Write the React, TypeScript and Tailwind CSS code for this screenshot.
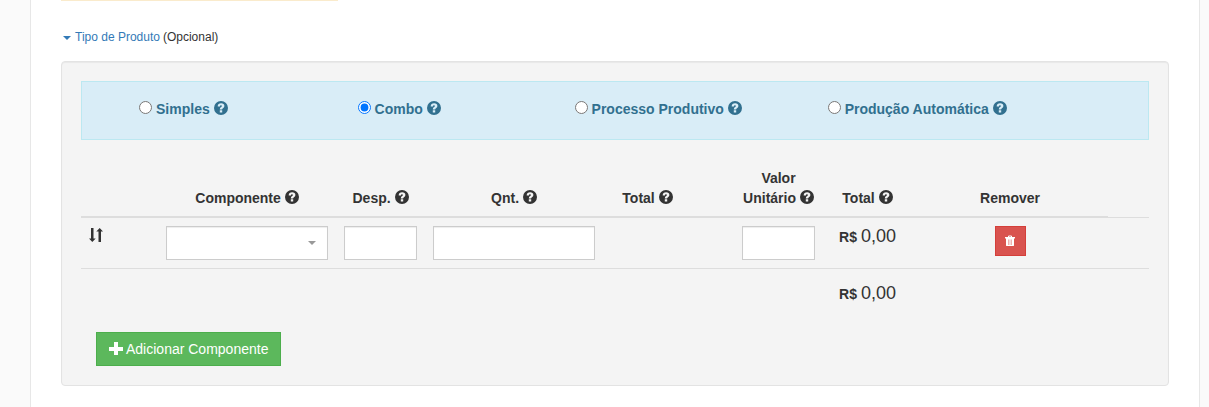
import React, { useState } from 'react';

const PRODUCT_TYPES = [
  { id: 'simples', label: 'Simples', width: 'w-2/12' },
  { id: 'combo', label: 'Combo', width: 'w-3/12' },
  { id: 'processo', label: 'Processo Produtivo', width: 'w-3/12' },
  { id: 'automatica', label: 'Produção Automática', width: 'w-3/12' },
];

const HelpIcon: React.FC = () => (
  <svg viewBox="0 0 14 14" className="inline-block size-[14px] align-[-1px]" fill="currentColor" aria-hidden="true">
    <path
      fillRule="evenodd"
      d="M7 0a7 7 0 1 1 0 14A7 7 0 0 1 7 0zM3.700 5.400H6c0-.7.400-1.100 1-1.100.6 0 .9.300.9.800 0 1-2.100 1.200-2.100 3.300h2.300c0-1.200 2.300-1.300 2.300-3.400C10.400 3.300 9.100 2.300 7.200 2.300 5 2.300 3.700 3.400 3.700 5.400zM5.800 9.200v2.400h2.400V9.200z"
    />
  </svg>
);

const SortIcon: React.FC = () => (
  <svg viewBox="0 0 14 14" className="size-[14px]" fill="currentColor" aria-hidden="true">
    <path d="M2 0h2.500v10.500H6.700L3.300 14 0 10.500h2z" />
    <path d="M9.500 14h2.500V3.500h2L10.700 0 7.300 3.500h2.200z" />
  </svg>
);

const TrashIcon: React.FC = () => (
  <svg viewBox="0 0 12 12" className="size-3" aria-hidden="true">
    <path d="M4.500 2V1h3v1" fill="none" stroke="#fff" strokeWidth="1" />
    <path d="M1 2h10v1.500H1z" fill="#fff" />
    <path d="M2 3h8v7.500c0 .3-.2.500-.5.500h-7c-.3 0-.5-.2-.5-.5z" fill="#fff" />
    <path d="M4 4.500h1V10H4zM5.500 4.500h1V10h-1zM7 4.500h1V10H7z" fill="#d9534f" fillOpacity=".45" />
  </svg>
);

const PlusIcon: React.FC = () => (
  <svg viewBox="0 0 14 14" className="size-[14px]" fill="currentColor" aria-hidden="true">
    <path d="M5 0h4v5h5v4H9v4H5V9H0V5h5z" />
  </svg>
);

const Caret: React.FC<{ className: string }> = ({ className }) => (
  <svg viewBox="0 0 8 4" className={`h-1 w-2 ${className}`} fill="currentColor" aria-hidden="true">
    <path d="M0 0h8L4 4z" />
  </svg>
);

const Price: React.FC = () => (
  <>
    <b>R$</b> <span className="text-lg leading-5">0,00</span>
  </>
);

const field = 'block h-[34px] w-full border border-[#ccc] bg-white px-3 shadow-[inset_0_1px_1px_rgba(0,0,0,0.075)]';

const App: React.FC = () => {
  const [type, setType] = useState('combo');

  return (
    <div className="min-h-screen bg-[#fafafa] pr-[9px] pl-[30px] font-['Liberation_Sans',Arial,sans-serif] text-sm leading-5 text-[#333]">
      <div className="min-h-screen border-x border-[#e7e7e7] bg-white px-[30px] pb-5">
        <div className="w-1/4 border-b border-[#faebcc]" />

        <div className="flex items-center gap-[3px] pt-[26px] pb-[14px] pl-[2px] text-xs leading-5">
          <a href="#tipo" className="flex items-center gap-1 text-[#337ab7]">
            <Caret className="mt-[2px]" />
            Tipo de Produto
          </a>
          <span>(Opcional)</span>
        </div>

        <section
          id="tipo"
          className="rounded border border-[#e3e3e3] bg-[#f4f4f4] p-[19px] shadow-[inset_0_1px_1px_rgba(0,0,0,0.05)]"
        >
          <div className="mb-5 flex border border-[#bce8f1] bg-[#d9edf7] px-[15px] pt-[17px] pb-5 font-bold text-[#31708f]">
            {PRODUCT_TYPES.map((item) => (
              <div key={item.id} className={`${item.width} text-center`}>
                <label className="inline-flex gap-1">
                  <input
                    type="radio"
                    name="tipo"
                    className="mt-[2px] size-[13px]"
                    checked={type === item.id}
                    onChange={() => setType(item.id)}
                  />
                  <span>
                    {item.label} <HelpIcon />
                  </span>
                </label>
              </div>
            ))}
          </div>

          <table className="w-full table-fixed border-separate border-spacing-0">
            <colgroup>
              <col className="w-[77px]" />
              <col className="w-2/12" />
              <col className="w-1/12" />
              <col className="w-2/12" />
              <col className="w-1/12" />
              <col className="w-[42px]" />
              <col className="w-1/12" />
              <col className="w-1/12" />
              <col className="w-[196px]" />
              <col />
            </colgroup>
            <thead>
              <tr className="align-bottom [&>th]:border-[#ddd] [&>th]:p-2 [&>th:not(:last-child)]:border-b-2">
                <th />
                <th>Componente <HelpIcon /></th>
                <th>Desp. <HelpIcon /></th>
                <th>Qnt. <HelpIcon /></th>
                <th>Total <HelpIcon /></th>
                <th />
                <th>Valor Unitário <HelpIcon /></th>
                <th>Total <HelpIcon /></th>
                <th>Remover</th>
                <th className="border-b" />
              </tr>
            </thead>
            <tbody className="[&_td]:px-2">
              <tr className="align-top [&>td]:py-2">
                <td><div className="pt-[2px]"><SortIcon /></div></td>
                <td>
                  <div className="relative">
                    <select aria-label="Componente" className={`${field} appearance-none`} />
                    <Caret className="pointer-events-none absolute top-[15px] right-3 text-[#999]" />
                  </div>
                </td>
                <td><input type="text" aria-label="Desp." className={field} /></td>
                <td><input type="text" aria-label="Qnt." className={field} /></td>
                <td />
                <td />
                <td><input type="text" aria-label="Valor Unitário" className={field} /></td>
                <td className="text-center"><Price /></td>
                <td>
                  <button
                    type="button"
                    aria-label="Remover"
                    className="mx-auto flex h-[30px] w-[31px] items-center justify-center border border-[#d43f3a] bg-[#d9534f]"
                  >
                    <TrashIcon />
                  </button>
                </td>
                <td />
              </tr>
              <tr className="[&>td]:border-t [&>td]:border-[#ddd] [&>td]:pt-[14px] [&>td]:pb-7">
                <td colSpan={7} />
                <td className="text-center"><Price /></td>
                <td colSpan={2} />
              </tr>
            </tbody>
          </table>

          <button
            type="button"
            className="ml-[15px] flex h-[34px] items-center gap-[3px] border border-[#4cae4c] bg-[#5cb85c] px-3 text-white"
          >
            <PlusIcon />
            Adicionar Componente
          </button>
        </section>
      </div>
    </div>
  );
};

export default App;
